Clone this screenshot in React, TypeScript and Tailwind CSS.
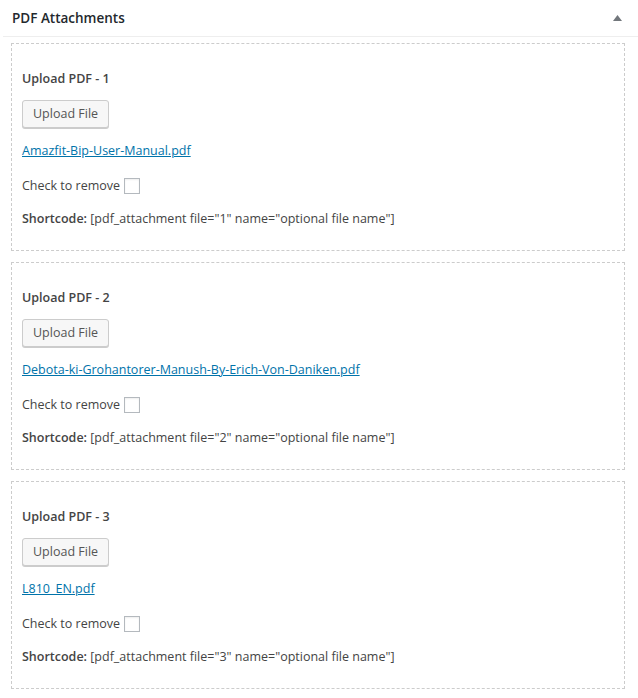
import React from "react";

const files = [
  { id: 1, name: "Amazfit-Bip-User-Manual.pdf" },
  { id: 2, name: "Debota-ki-Grohantorer-Manush-By-Erich-Von-Daniken.pdf" },
  { id: 3, name: "L810_EN.pdf" },
];

function UploadBox({ id, name }: { id: number; name: string }) {
  return (
    <div className="border border-dashed border-[#ccc] px-[10px] pt-[26px] pb-[22px]">
      <p className="h-[18px] text-[12.5px] font-semibold leading-[18px]">Upload PDF - {id}</p>
      <button
        type="button"
        className="mt-[12px] block h-[28px] rounded-[3px] border border-[#ccc] bg-[#f7f7f7] px-[10px] text-[12.5px] leading-[26px] text-[#555] shadow-[0_1px_0_#ccc]"
      >
        Upload File
      </button>
      <a href="#" className="mt-[14px] block h-[18px] leading-[18px] text-[#0073aa] underline">
        {name}
      </a>
      <label className="mt-[17px] flex h-[18px] items-center gap-[4px] leading-[18px]">
        Check to remove
        <span className="block h-[16px] w-[16px] border border-[#b4b9be] bg-white shadow-[inset_0_1px_2px_rgba(0,0,0,0.07)]" />
      </label>
      <p className="mt-[15px] h-[18px] leading-[18px]">
        <span className="font-semibold">Shortcode:</span> [pdf_attachment file="{id}" name="optional
        file name"]
      </p>
    </div>
  );
}

export default function App() {
  return (
    <div className="h-[698px] w-[638px] bg-white text-[12.5px] text-[#444] [font-family:'Open_Sans',sans-serif]">
      <div className="ml-[3px] flex h-[37px] items-center justify-between border-b border-[#eee] pl-[9px] pr-[16px]">
        <h2 className="text-[13.5px] font-semibold text-[#23282d]">PDF Attachments</h2>
        <svg width="9" height="6" viewBox="0 0 9 6" aria-hidden>
          <polygon points="4.5,0 9,6 0,6" fill="#72777c" />
        </svg>
      </div>
      <div className="ml-[11px] mr-[13px] mt-[6px] flex flex-col gap-[11px]">
        {files.map((f) => (
          <UploadBox key={f.id} id={f.id} name={f.name} />
        ))}
      </div>
    </div>
  );
}
